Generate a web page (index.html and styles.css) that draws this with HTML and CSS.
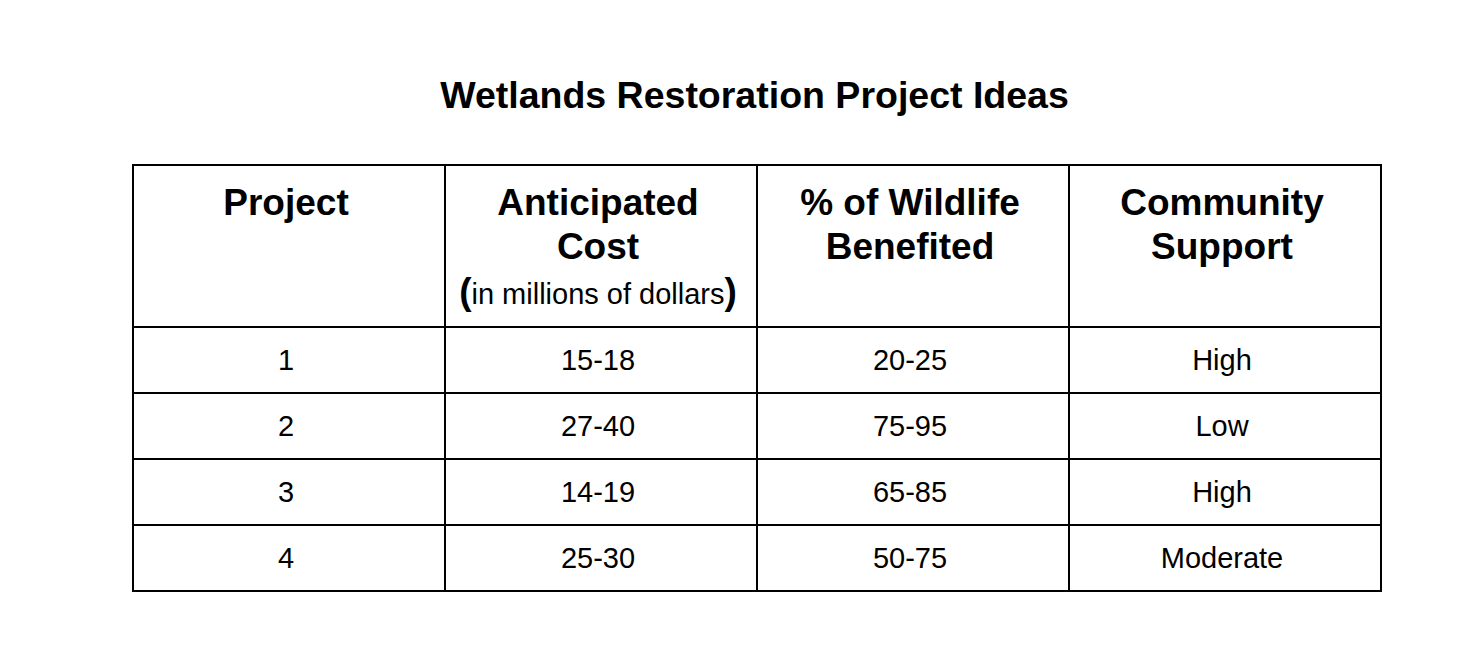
FILE: index.html
```html
<!DOCTYPE html>
<html lang="en">
<head>
<meta charset="utf-8">
<title>Wetlands Restoration Project Ideas</title>
<link rel="stylesheet" href="styles.css">
</head>
<body>
<main class="page">
  <h1 class="title">Wetlands Restoration Project Ideas</h1>
  <div class="table">
    <div class="cell head">Project</div>
    <div class="cell head">Anticipated<br>Cost<span class="sub"><span class="paren">(</span>in millions of dollars<span class="paren">)</span></span></div>
    <div class="cell head">% of Wildlife<br>Benefited</div>
    <div class="cell head">Community<br>Support</div>

    <div class="cell">1</div><div class="cell">15-18</div><div class="cell">20-25</div><div class="cell">High</div>
    <div class="cell">2</div><div class="cell">27-40</div><div class="cell">75-95</div><div class="cell">Low</div>
    <div class="cell">3</div><div class="cell">14-19</div><div class="cell">65-85</div><div class="cell">High</div>
    <div class="cell">4</div><div class="cell">25-30</div><div class="cell">50-75</div><div class="cell">Moderate</div>
  </div>
</main>
</body>
</html>
```

FILE: styles.css
```css
html, body {
  margin: 0;
  padding: 0;
  background: #fff;
}
body {
  font-family: "Liberation Sans", Arial, sans-serif;
  color: #000;
}
.page {
  width: 1250px;
  padding: 73px 0 0 132px;
}
.title {
  margin: 0 0 47px 0;
  padding-right: 5px;
  font-size: 37.5px;
  line-height: 44px;
  font-weight: bold;
  text-align: center;
}
.table {
  display: grid;
  grid-template-columns: repeat(4, 310px);
  grid-template-rows: 160px repeat(4, 64px);
  gap: 2px;
  padding: 2px;
  background: #000;
  width: 1246px;
}
.cell {
  background: #fff;
  display: flex;
  align-items: center;
  justify-content: center;
  padding-right: 6px;
  font-size: 29px;
  text-align: center;
}
.cell.head {
  display: block;
  padding-top: 15px;
  font-size: 37px;
  line-height: 44px;
  font-weight: bold;
}
.sub {
  display: block;
  font-size: 29px;
  font-weight: normal;
  line-height: 46px;
}
.paren {
  font-size: 37px;
  font-weight: bold;
}
```
